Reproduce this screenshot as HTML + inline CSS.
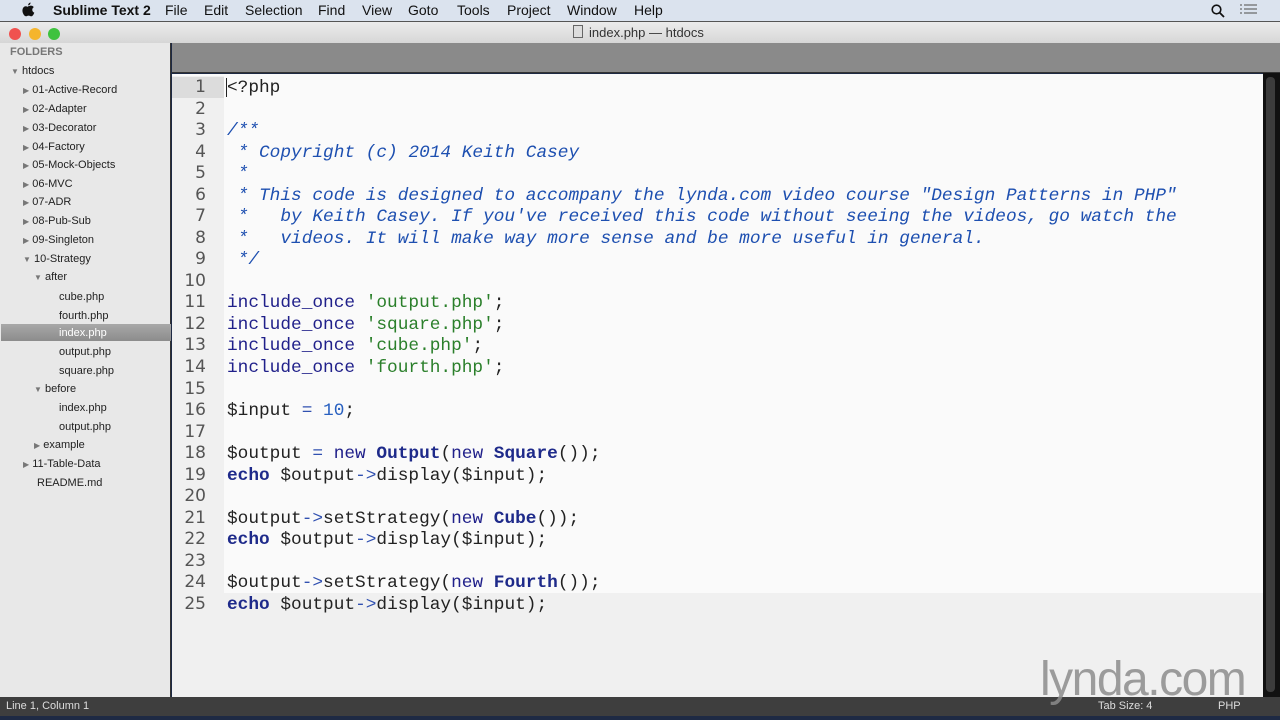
<!DOCTYPE html>
<html><head><meta charset="utf-8">
<style>
*{margin:0;padding:0;box-sizing:border-box}
body{width:1280px;height:720px;overflow:hidden;background:#1e2a44;font-family:"Liberation Sans",sans-serif;position:relative}
#menu{position:absolute;left:0;top:0;width:1280px;height:21px;background:#dbe3ee;font-size:14px;color:#111}
#menu span{position:absolute;top:2px}
#title{position:absolute;left:0;top:21px;width:1280px;height:22px;background:linear-gradient(#ececec,#d6d6d6);border-top:1px solid #555;font-size:13px;color:#333}
.dot{position:absolute;top:6px;width:12px;height:12px;border-radius:50%}
#side{position:absolute;left:0;top:43px;width:171px;height:654px;background:#e8e8e8;border-right:1px solid #333;font-size:11px;color:#222}
#side div{position:absolute;white-space:nowrap}
.tri{font-size:8px;color:#777}
#tabs{position:absolute;left:172px;top:43px;width:1108px;height:30px;background:#8a8a8a;border-bottom:1px solid #333}
#ed{position:absolute;left:172px;top:74px;width:1091px;height:623px;background:#f0f0f0}
#white{position:absolute;left:0;top:0;width:1091px;height:519px;background:#fafafa}
#gut{position:absolute;left:0;top:2px;width:52px;background:#f0f0f0;height:517px}
.ln{position:absolute;left:0;width:34px;text-align:right;font-family:"DejaVu Sans",sans-serif;font-size:17px;color:#555}
.cl{position:absolute;left:55px;font-family:"Liberation Mono",monospace;font-size:17.8px;white-space:pre;color:#222}
.c{color:#1d4fb0;font-style:italic}
.k{color:#20208a}
.s{color:#2a7f2a}
.n{color:#2860c0}
.o{color:#3050b0}
.b{color:#1e2a8a;font-weight:bold}
#scroll{position:absolute;left:1263px;top:73px;width:17px;height:624px;background:#111}
#thumb{position:absolute;left:3px;top:4px;width:9px;height:615px;background:#3c3c3c;border-radius:4px}
#status{position:absolute;left:0;top:697px;width:1280px;height:19px;background:#3e3e3e;font-size:11px;color:#ddd}
</style></head><body>
<div id="menu">
<svg style="position:absolute;left:21px;top:2px" width="14" height="16" viewBox="0 0 14 16"><path d="M9.5 0.5c0.2 1.3-0.9 2.8-2.3 2.9-0.2-1.3 1-2.7 2.3-2.9zM7 4.3c0.8 0 1.8-0.8 3-0.7 0.6 0 2 0.3 2.8 1.5-2.3 1.4-1.9 4.6 0.5 5.5-0.5 1.5-1.6 3.7-3 3.7-1.1 0-1.3-0.7-2.7-0.7s-1.7 0.7-2.7 0.7c-1.4 0-3.1-2.6-3.4-4.8-0.4-3 1.2-5.3 3.3-5.3 1 0 1.6 0.6 2.2 0.6z" fill="#111"/></svg>
<span style="left:53px;font-weight:bold">Sublime Text 2</span>
<span style="left:165px">File</span><span style="left:204px">Edit</span><span style="left:245px">Selection</span><span style="left:318px">Find</span><span style="left:362px">View</span><span style="left:408px">Goto</span><span style="left:457px">Tools</span><span style="left:507px">Project</span><span style="left:567px">Window</span><span style="left:634px">Help</span>
<svg style="position:absolute;left:1211px;top:4px" width="14" height="14"><circle cx="5.5" cy="5.5" r="4.3" fill="none" stroke="#111" stroke-width="1.6"/><line x1="8.5" y1="8.5" x2="13" y2="13" stroke="#111" stroke-width="1.8"/></svg>
<svg style="position:absolute;left:1240px;top:4px" width="17" height="12"><g stroke="#666" stroke-width="1.2"><line x1="0" y1="1" x2="2" y2="1"/><line x1="4" y1="1" x2="17" y2="1"/><line x1="0" y1="5" x2="2" y2="5"/><line x1="4" y1="5" x2="17" y2="5"/><line x1="0" y1="9" x2="2" y2="9"/><line x1="4" y1="9" x2="17" y2="9"/></g></svg>
</div>
<div id="title">
<div class="dot" style="left:9px;background:#f0524f"></div><div class="dot" style="left:29px;background:#f5b52d"></div><div class="dot" style="left:48px;background:#3ec23e"></div>
<span style="position:absolute;left:573px;top:3px;width:10px;height:13px;border:1px solid #666;background:#ddd"></span>
<span style="position:absolute;left:589px;top:3px">index.php — htdocs</span>
</div>
<div id="side">
<div style="left:10px;top:3px;font-weight:bold;color:#777">FOLDERS</div>
<div style="left:11px;top:22px"><span class="tri">▼</span> htdocs</div>
<div style="left:23px;top:41px"><span class="tri">▶</span> 01-Active-Record</div>
<div style="left:23px;top:60px"><span class="tri">▶</span> 02-Adapter</div>
<div style="left:23px;top:79px"><span class="tri">▶</span> 03-Decorator</div>
<div style="left:23px;top:98px"><span class="tri">▶</span> 04-Factory</div>
<div style="left:23px;top:116px"><span class="tri">▶</span> 05-Mock-Objects</div>
<div style="left:23px;top:135px"><span class="tri">▶</span> 06-MVC</div>
<div style="left:23px;top:153px"><span class="tri">▶</span> 07-ADR</div>
<div style="left:23px;top:172px"><span class="tri">▶</span> 08-Pub-Sub</div>
<div style="left:23px;top:191px"><span class="tri">▶</span> 09-Singleton</div>
<div style="left:23px;top:210px"><span class="tri">▼</span> 10-Strategy</div>
<div style="left:34px;top:228px"><span class="tri">▼</span> after</div>
<div style="left:59px;top:248px">cube.php</div>
<div style="left:59px;top:267px">fourth.php</div>
<div style="left:1px;top:281px;width:170px;height:17px;background:linear-gradient(#a8a8a8,#8c8c8c)"></div>
<div style="left:59px;top:284px;color:#fff">index.php</div>
<div style="left:59px;top:303px">output.php</div>
<div style="left:59px;top:322px">square.php</div>
<div style="left:34px;top:340px"><span class="tri">▼</span> before</div>
<div style="left:59px;top:359px">index.php</div>
<div style="left:59px;top:378px">output.php</div>
<div style="left:34px;top:396px"><span class="tri">▶</span> example</div>
<div style="left:23px;top:415px"><span class="tri">▶</span> 11-Table-Data</div>
<div style="left:37px;top:434px">README.md</div>
</div>
<div id="tabs"></div>
<div id="ed">
<div id="white"></div>
<div id="gut"></div>
<div style="position:absolute;left:0;top:3px;width:52px;height:21px;background:#dcdcdc"></div>
<div style="position:absolute;left:54px;top:4px;width:1px;height:19px;background:#222"></div>
<div id="lines"></div>
</div>
<div id="scroll"><div id="thumb"></div></div>
<div id="status"><span style="position:absolute;left:6px;top:3px">Line 1, Column 1</span><span style="position:absolute;left:1098px;top:3px">Tab Size: 4</span><span style="position:absolute;left:1218px;top:3px">PHP</span></div>
<div style="position:absolute;left:1040px;top:652px;font-size:48px;color:rgba(140,140,140,0.85);letter-spacing:-1.5px;font-family:'Liberation Sans',sans-serif">lynda.com</div>
<script>
var L=['&lt;?php','','<span class="c">/**</span>','<span class="c"> * Copyright (c) 2014 Keith Casey</span>','<span class="c"> *</span>',
'<span class="c"> * This code is designed to accompany the lynda.com video course "Design Patterns in PHP"</span>',
'<span class="c"> *   by Keith Casey. If you\'ve received this code without seeing the videos, go watch the</span>',
'<span class="c"> *   videos. It will make way more sense and be more useful in general.</span>',
'<span class="c"> */</span>','',
'<span class="k">include_once</span> <span class="s">\'output.php\'</span>;',
'<span class="k">include_once</span> <span class="s">\'square.php\'</span>;',
'<span class="k">include_once</span> <span class="s">\'cube.php\'</span>;',
'<span class="k">include_once</span> <span class="s">\'fourth.php\'</span>;','',
'$input <span class="o">=</span> <span class="n">10</span>;','',
'$output <span class="o">=</span> <span class="k">new</span> <span class="b">Output</span>(<span class="k">new</span> <span class="b">Square</span>());',
'<span class="b">echo</span> $output<span class="o">-&gt;</span>display($input);','',
'$output<span class="o">-&gt;</span>setStrategy(<span class="k">new</span> <span class="b">Cube</span>());',
'<span class="b">echo</span> $output<span class="o">-&gt;</span>display($input);','',
'$output<span class="o">-&gt;</span>setStrategy(<span class="k">new</span> <span class="b">Fourth</span>());',
'<span class="b">echo</span> $output<span class="o">-&gt;</span>display($input);'];
var h='';
for(var i=0;i<L.length;i++){var t=3+i*21.54;
h+='<div class="ln" style="top:'+t+'px;line-height:21px">'+(i+1)+'</div><div class="cl" style="top:'+(t+1)+'px;line-height:21px">'+L[i]+'</div>';}
document.getElementById('lines').innerHTML=h;
</script>
</body></html>
